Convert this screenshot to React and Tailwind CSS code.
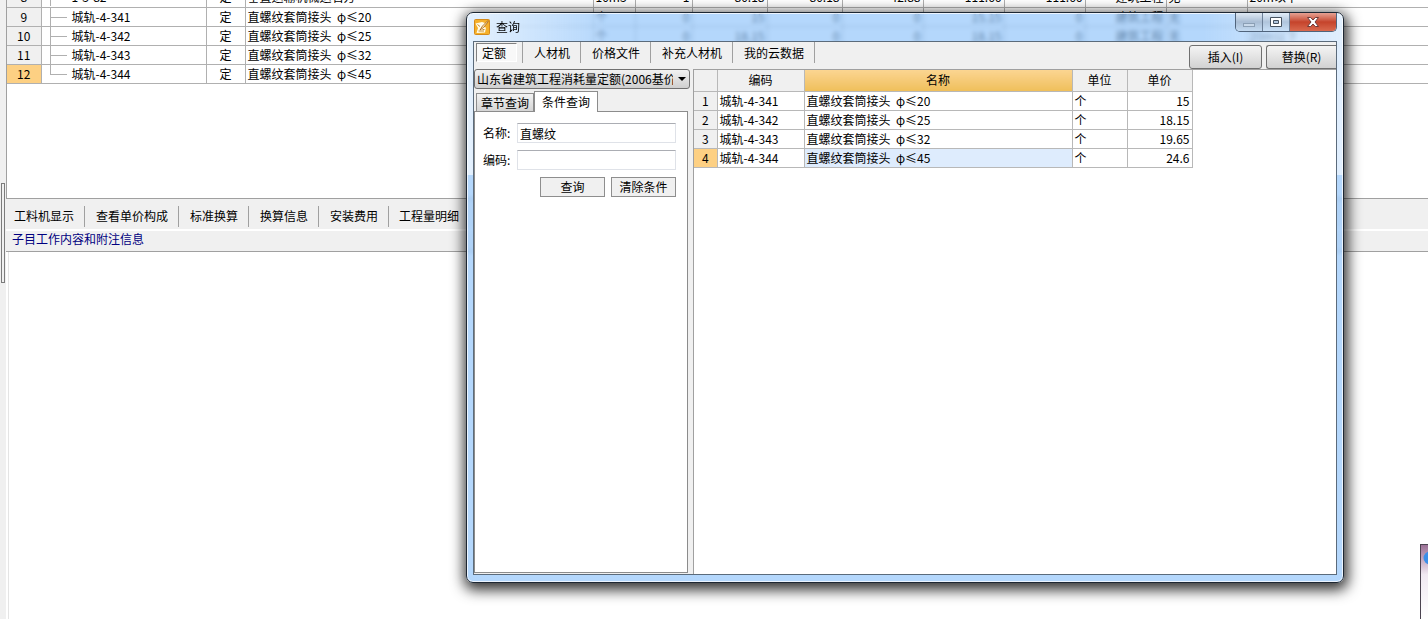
import { useState } from "react"

const quotaRows = [
  { no: "8", code: "1-3-82", name: "垂直运输机械运石方", cells: ["10m3", "1", "80.18", "80.18", "42.88", "111.66", "111.66", "建筑工程", "无", "20m以下"] },
  { no: "9", code: "城轨-4-341", name: "直螺纹套筒接头  φ≤20", cells: ["个", "0", "15", "0", "0", "15.15", "0", "建筑工程", "无", ""] },
  { no: "10", code: "城轨-4-342", name: "直螺纹套筒接头  φ≤25", cells: ["个", "0", "18.15", "0", "0", "18.15", "0", "建筑工程", "无", "20m以下"] },
  { no: "11", code: "城轨-4-343", name: "直螺纹套筒接头  φ≤32", cells: ["", "", "", "", "", "", "", "", "", ""] },
  { no: "12", code: "城轨-4-344", name: "直螺纹套筒接头  φ≤45", cells: ["", "", "", "", "", "", "", "", "", ""] },
]

const detailTabs = ["工料机显示", "查看单价构成", "标准换算", "换算信息", "安装费用", "工程量明细"]

const results = [
  { code: "城轨-4-341", name: "直螺纹套筒接头  φ≤20", unit: "个", price: "15" },
  { code: "城轨-4-342", name: "直螺纹套筒接头  φ≤25", unit: "个", price: "18.15" },
  { code: "城轨-4-343", name: "直螺纹套筒接头  φ≤32", unit: "个", price: "19.65" },
  { code: "城轨-4-344", name: "直螺纹套筒接头  φ≤45", unit: "个", price: "24.6" },
]

const sources = ["定额", "人材机", "价格文件", "补充人材机", "我的云数据"]

function TreeLine({ last }) {
  return (
    <svg width="18" height="18" className="ml-2 mr-1 shrink-0" stroke="#b0b0b0" fill="none" shapeRendering="crispEdges">
      <path d={last ? "M0.5 0V9.5H17" : "M0.5 0V18M0.5 9.5H17"} />
    </svg>
  )
}

function QuotaTable() {
  return (
    <table className="-mt-3 w-full table-fixed border-collapse">
      <colgroup>
        <col className="w-[34px]" />
        <col className="w-[165px]" />
        <col className="w-[39px]" />
        <col className="w-[348px]" />
        <col className="w-[42px]" />
        <col className="w-[57px]" />
        <col className="w-[75px]" />
        <col className="w-[75px]" />
        <col className="w-[81px]" />
        <col className="w-[81px]" />
        <col className="w-[81px]" />
        <col className="w-[81px]" />
        <col className="w-[81px]" />
        <col />
      </colgroup>
      <tbody>
        {quotaRows.map((row, i) => {
          const current = i === quotaRows.length - 1
          return (
            <tr key={row.no} className="h-[19px]">
              <th className={`border-r border-b border-[#b0b0b0] p-0 font-normal ${current ? "bg-[#fdd083]" : "bg-[#f0f0f0]"}`}>
                {row.no}
              </th>
              <td className="border-r border-b border-[#b0b0b0] p-0">
                <div className="flex h-[18px] items-center">
                  <TreeLine last={current} />
                  {row.code}
                </div>
              </td>
              <td className="border-r border-b border-[#b0b0b0] p-0 text-center">定</td>
              <td className="border-r border-b border-[#b0b0b0] p-0 pl-0.5 whitespace-pre">{row.name}</td>
              {row.cells.map((cell, j) => (
                <td
                  key={j}
                  className={`overflow-hidden border-b border-[#b0b0b0] p-0 whitespace-nowrap ${j < 9 ? "border-r" : ""} ${
                    j === 0 || j > 7 ? "pl-0.5 text-left" : "pr-0.5 text-right"
                  }`}
                >
                  {cell}
                </td>
              ))}
            </tr>
          )
        })}
      </tbody>
    </table>
  )
}

function AppIcon() {
  return (
    <svg width="16" height="16" viewBox="0 0 16 16" aria-hidden="true">
      <rect x="0.5" y="0.5" width="15" height="15" rx="1" fill="#f5b02a" stroke="#d58a1a" />
      <path d="M1.500 4.500L8 3l3 1-2 4 3 .5-1 5-8.500.500L4 9z" fill="#fffbe8" />
      <path d="M3.500 5.500L6 7.500M4.500 12h5.500M8.500 10.500h2" stroke="#c98a2a" fill="none" />
      <path d="M14 1.500L8.500 7 6 11l3.500-2.500L14 3z" fill="#fff3c4" stroke="#a35a0c" strokeWidth="0.8" />
    </svg>
  )
}

function CaptionButtons() {
  return (
    <div className="flex h-[19px] overflow-hidden rounded-b-[5px] border border-t-0 border-[#50647c]">
      <button aria-label="最小化" className="flex w-[27px] items-center justify-center border-r border-[#6c8098] bg-linear-to-b from-[#dfe9f4] via-[#a9bdd4] to-[#c4dbf2]">
        <svg width="14" height="12" viewBox="0 0 14 12">
          <rect x="1.5" y="7.5" width="11" height="3" fill="#c9d9ea" stroke="#8b9fb5" />
        </svg>
      </button>
      <button aria-label="最大化" className="flex w-[27px] items-center justify-center border-r border-[#6c8098] bg-linear-to-b from-[#e3edf8] via-[#b0c5dc] to-[#c9e0f7]">
        <svg width="12" height="11" viewBox="0 0 12 11">
          <path d="M.5.5h11v9H.5zM3.500 3.500v3h5v-3z" fill="#fff" fillRule="evenodd" stroke="#46525f" />
        </svg>
      </button>
      <button aria-label="关闭" className="flex w-[46px] items-center justify-center bg-linear-to-b from-[#e5a193] via-[#c5432b] to-[#d9694e]">
        <svg width="14" height="11" viewBox="0 0 14 11">
          <path d="M1.5.5h3.200L7 3 9.300.5h3.200L9 5l3.500 4.500H9.300L7 7 4.700 9.500H1.500L5 5z" fill="#fff" stroke="#6e3a38" />
        </svg>
      </button>
    </div>
  )
}

function SearchPanel() {
  const [name, setName] = useState("直螺纹")
  const [code, setCode] = useState("")

  return (
    <div className="flex w-[216px] shrink-0 flex-col">
      <div className="relative">
        <select
          aria-label="定额库"
          className="block h-5 w-full appearance-none overflow-hidden rounded-[3px] border border-[#707070] bg-linear-to-b from-[#f2f2f2] to-[#cfcfcf] pr-4 pl-0.5 text-clip"
        >
          <option>山东省建筑工程消耗量定额(2006基价)</option>
        </select>
        <svg width="8" height="4" className="pointer-events-none absolute top-2 right-1">
          <path d="M0 0h8L4 4z" />
        </svg>
      </div>

      <div className="mt-0.5 flex items-end">
        <button className="ml-0.5 h-[18px] w-[58px] border border-b-0 border-[#8c8c8c] bg-linear-to-b from-[#f2f2f2] to-[#d5d5d5] text-center whitespace-nowrap">
          章节查询
        </button>
        <button className="z-10 -mb-px h-[21px] w-16 border border-b-0 border-[#8c8c8c] bg-white whitespace-nowrap">条件查询</button>
      </div>

      <form className="mr-0.5 mb-px flex-1 border border-[#8c8c8c] bg-white pt-[11px] pr-[11px] pl-2" onSubmit={(e) => e.preventDefault()}>
        <div className="flex items-center">
          <label htmlFor="quota-name" className="w-[34px] whitespace-nowrap">名称:</label>
          <input
            id="quota-name"
            value={name}
            onChange={(e) => setName(e.target.value)}
            className="h-5 min-w-0 flex-1 border border-[#dfe2e8] border-t-[#abadb3] px-0.5 outline-none"
          />
        </div>
        <div className="mt-[7px] flex items-center">
          <label htmlFor="quota-code" className="w-[34px] whitespace-nowrap">编码:</label>
          <input
            id="quota-code"
            value={code}
            onChange={(e) => setCode(e.target.value)}
            className="h-5 min-w-0 flex-1 border border-[#dfe2e8] border-t-[#abadb3] px-0.5 outline-none"
          />
        </div>
        <div className="mt-[7px] flex justify-end gap-1.5">
          <button type="submit" className="h-5 w-[65px] border border-[#8e8e8e] bg-[#f0f0f0]">查询</button>
          <button type="reset" onClick={() => { setName(""); setCode("") }} className="h-5 w-[65px] border border-[#8e8e8e] bg-[#f0f0f0]">
            清除条件
          </button>
        </div>
      </form>
    </div>
  )
}

function ResultTable() {
  return (
    <table className="table-fixed border-collapse">
      <colgroup>
        <col className="w-[23px]" />
        <col className="w-[87px]" />
        <col className="w-[268px]" />
        <col className="w-[55px]" />
        <col className="w-[65px]" />
      </colgroup>
      <thead>
        <tr className="h-[21px] bg-[#f0f0f0]">
          <th className="border-r border-b border-[#b8b8b8] p-0"></th>
          <th className="border-r border-b border-[#b8b8b8] p-0 font-normal">编码</th>
          <th className="border-r border-b border-[#b8b8b8] bg-linear-to-b from-[#fbd591] to-[#efbf5a] p-0 font-normal">名称</th>
          <th className="border-r border-b border-[#b8b8b8] p-0 font-normal">单位</th>
          <th className="border-r border-b border-[#b8b8b8] p-0 font-normal">单价</th>
        </tr>
      </thead>
      <tbody>
        {results.map((row, i) => {
          const current = i === results.length - 1
          return (
            <tr key={row.code} className="h-[19px]">
              <th className={`border-r border-b border-[#b8b8b8] p-0 font-normal ${current ? "bg-[#fdd083]" : "bg-[#f0f0f0]"}`}>{i + 1}</th>
              <td className="border-r border-b border-[#b8b8b8] p-0 pl-0.5">{row.code}</td>
              <td className={`border-r border-b border-[#b8b8b8] p-0 pl-0.5 whitespace-pre ${current ? "bg-[#deecfd]" : ""}`}>{row.name}</td>
              <td className="border-r border-b border-[#b8b8b8] p-0 pl-0.5">{row.unit}</td>
              <td className="border-r border-b border-[#b8b8b8] p-0 pr-0.5 text-right">{row.price}</td>
            </tr>
          )
        })}
      </tbody>
    </table>
  )
}

function QueryDialog() {
  return (
    <div
      role="dialog"
      aria-label="查询"
      className="absolute top-3 left-[466px] flex h-[571px] w-[878px] flex-col rounded-[7px] border border-[#1d2733] bg-[#8cc2fb]/65 bg-[linear-gradient(90deg,rgba(255,255,255,0.65),transparent_16%,transparent_84%,rgba(255,255,255,0.6))] bg-size-[100%_162px] bg-no-repeat px-1.5 pb-[7px] shadow-[1px_4px_14px_3px_rgba(0,0,0,0.8),inset_0_0_0_1px_rgba(255,255,255,0.75)] backdrop-blur-[2px]"
    >
      <div className="flex h-7 items-start justify-between">
        <div className="flex h-7 items-center gap-1.5 pl-px">
          <AppIcon />
          <h1>查询</h1>
        </div>
        <CaptionButtons />
      </div>

      <div className="flex min-h-0 flex-1 flex-col border border-[#5b6b7b] bg-[#f0f0f0]">
        <div className="flex h-[27px] justify-between">
          <div className="flex h-[21px]">
            {sources.map((source, i) => (
              <div key={source} className={`border-r border-[#a0a0a0] ${i === 0 ? "py-px pr-[5px] pl-0.5" : "pr-[5px] pl-1.5"}`}>
                <button
                  className={
                    i === 0
                      ? "h-full border border-[#808080] border-r-white border-b-white bg-[#f8f8f8] pr-2.5 pl-[5px] whitespace-nowrap"
                      : "h-full px-[5px] whitespace-nowrap"
                  }
                >
                  {source}
                </button>
              </div>
            ))}
          </div>
          <div className="flex gap-1 pt-[3px]">
            <button className="h-6 w-[73px] rounded-[3px] border border-[#707070] bg-linear-to-b from-[#f4f4f4] to-[#d2d2d2]">插入(I)</button>
            <button className="h-6 w-[70px] rounded-l-[3px] border border-r-0 border-[#707070] bg-linear-to-b from-[#f4f4f4] to-[#d2d2d2]">替换(R)</button>
          </div>
        </div>

        <div className="flex min-h-0 flex-1 gap-[3px]">
          <SearchPanel />
          <div className="min-w-0 flex-1 border-t border-l border-[#a0a0a0] bg-white">
            <ResultTable />
          </div>
        </div>
      </div>
    </div>
  )
}

function SideWidget() {
  return (
    <div className="absolute right-0 bottom-0 h-[75px] w-2 overflow-hidden border-t border-l border-[#4b4350] bg-linear-to-b from-[#9b7196] via-[#f0e9f2] via-40% to-white">
      <svg width="14" height="14" className="mt-1.5 ml-0.5">
        <circle cx="7" cy="7" r="6.5" fill="#3b8fe8" />
      </svg>
    </div>
  )
}

export default function App() {
  return (
    <div className="relative flex h-screen overflow-hidden bg-white font-['Noto_Sans_CJK_SC','Liberation_Sans',sans-serif] text-xs leading-4 text-black">
      <div className="flex w-1.5 shrink-0 flex-col bg-[#f0f0f0] pt-[183px] pl-px">
        <div className="h-[100px] w-1 border border-[#7c7c7c] bg-[#f0f0f0]"></div>
      </div>

      <main className="flex min-w-0 flex-1 flex-col">
        <section className="h-[199px] shrink-0 overflow-hidden border-b border-l border-[#a0a0a0]">
          <QuotaTable />
        </section>
        <nav className="flex h-[30px] shrink-0 items-center bg-[#f0f0f0] pt-1">
          {detailTabs.map((tab, i) => (
            <button
              key={tab}
              className={`h-[21px] border-[#a0a0a0] whitespace-nowrap ${i === 0 ? "border-r pr-2.5 pl-2" : i === detailTabs.length - 1 ? "px-2.5" : "border-r pr-2.5 pl-[11px]"}`}
            >
              {tab}
            </button>
          ))}
        </nav>
        <h2 className="mt-0.5 h-[21px] shrink-0 border-b border-[#a0a0a0] bg-[#f0f0f0] pl-1.5 text-[#000080]">子目工作内容和附注信息</h2>
        <div className="ml-0.5 flex-1 border-l border-[#e4e4e4] bg-white"></div>
      </main>

      <QueryDialog />
      <SideWidget />
    </div>
  )
}
